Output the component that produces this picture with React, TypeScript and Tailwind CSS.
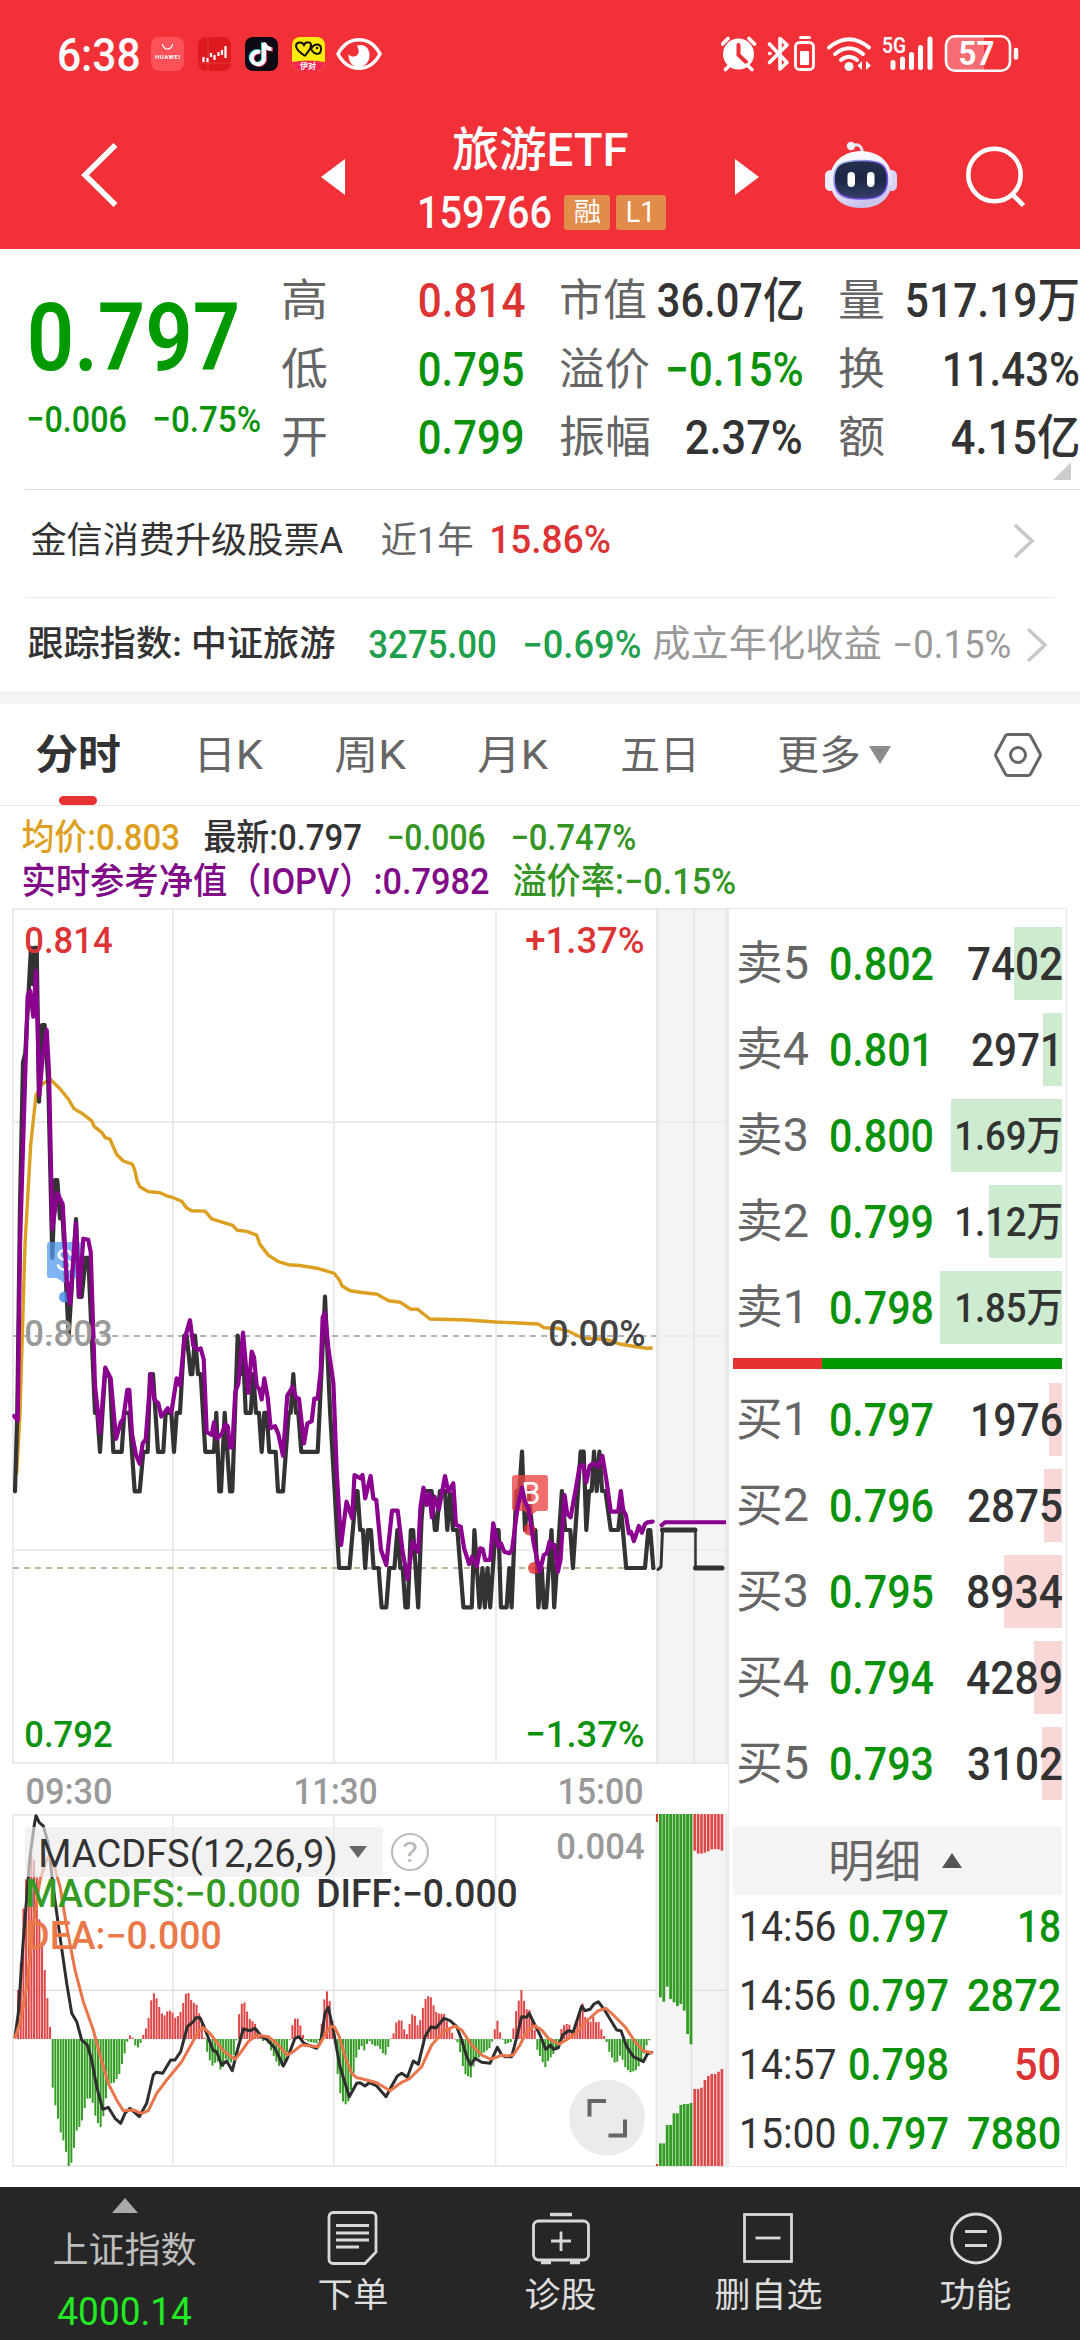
import { useLayoutEffect, useRef, type ReactNode } from "react";

/* Single-line text whose glyphs are condensed or widened to a given ink width. */
function Fit({ w, className = "", children }: { w: number; className?: string; children: ReactNode }) {
  const ref = useRef<HTMLSpanElement>(null);
  useLayoutEffect(() => {
    const el = ref.current;
    if (!el) return;
    const pad = parseFloat(getComputedStyle(el).fontSize) * 0.09;
    el.style.transform = `translateX(${-pad / 2}px) scaleX(${(w + pad) / el.offsetWidth})`;
  });
  return (
    <span className={"block shrink-0 whitespace-nowrap leading-none " + className} style={{ width: w }}>
      <span ref={ref} className="inline-block origin-left whitespace-pre">
        {children}
      </span>
    </span>
  );
}

/* Chart caption: y is the vertical centre of the capitals. */
function Cap({ x, y, w, size, fill, weight = 500, children }: { x: number; y: number; w: number; size: number; fill: string; weight?: number; children: string }) {
  return (
    <text x={x - size * 0.045} y={y + size * 0.356} fontSize={size} fontWeight={weight} fill={fill} textLength={w + size * 0.09} lengthAdjust="spacingAndGlyphs">
      {children}
    </text>
  );
}

type P = [number, number][];
const lowRes = (pts: P): P => pts.map(([x, y]) => [x / 3, 900 + y / 2.613]);
const right = (pts: P): P => pts.map(([x, y]) => [320 + x / 2.985, 1260 + y / 3]);
const macdPts = (a: P, b: P): P => [...a, ...b.map(([x, y]) => [x + 1080, y] as [number, number])].map(([x, y]) => [x / 3, 1800 + y / 3]);
const str = (pts: P) => pts.map(([x, y]) => `${x.toFixed(1)},${y.toFixed(1)}`).join(" ");

const price = str([
  ...lowRes([[45, 1545], [52, 1340], [60, 800], [69, 425], [76, 400], [93, 125], [98, 220], [103, 125], [110, 125], [117, 527], [126, 327], [134, 327], [145, 480], [157, 935], [165, 732], [172, 732], [180, 832], [188, 832], [206, 1138], [228, 834], [236, 1037], [245, 1037], [257, 935], [265, 935], [285, 1340], [292, 1340], [300, 1442], [316, 1225], [330, 1250], [340, 1442], [365, 1442], [373, 1340], [388, 1340], [404, 1545], [419, 1545], [430, 1442], [443, 1442], [450, 1239], [459, 1239], [474, 1442], [490, 1442], [497, 1340], [514, 1340], [522, 1442], [530, 1340], [540, 1340], [553, 1138], [560, 1138], [572, 1239], [577, 1239], [585, 1138], [594, 1239], [602, 1239], [616, 1442], [642, 1442], [649, 1340], [658, 1545], [663, 1545], [674, 1340], [690, 1545], [697, 1545], [713, 1138], [722, 1239], [729, 1170], [737, 1340], [752, 1340], [760, 1239], [768, 1340], [777, 1340], [785, 1442], [793, 1340], [800, 1340], [808, 1442], [827, 1442], [834, 1545], [849, 1545], [866, 1340], [872, 1340], [880, 1239], [888, 1340], [895, 1340], [904, 1442], [953, 1442]]),
  ...right([[15, 110], [30, 455], [57, 924], [88, 924], [108, 693], [112, 693], [120, 810], [128, 810], [135, 924], [143, 810], [152, 810], [160, 924], [175, 924], [184, 1042], [198, 1042], [207, 924], [222, 924], [231, 810], [240, 924], [247, 924], [255, 1042], [262, 1042], [271, 810], [278, 810], [293, 1042], [303, 780], [310, 693], [333, 693], [343, 810], [348, 810], [358, 693], [373, 693], [380, 810], [388, 700], [397, 810], [410, 810], [428, 1042], [453, 1042], [461, 810], [476, 1042], [485, 924], [492, 1042], [500, 924], [508, 1042], [524, 810], [533, 810], [540, 1042], [557, 1042], [565, 924], [572, 1042], [586, 693], [595, 693], [603, 575], [612, 810], [622, 693], [634, 810], [643, 810], [652, 1042], [662, 924], [668, 1042], [675, 1042], [691, 810], [699, 1042], [722, 693], [732, 810], [747, 810], [755, 924], [778, 575], [787, 575], [795, 810], [803, 693], [811, 693], [818, 575], [826, 693], [834, 575], [842, 693], [852, 693], [868, 810], [890, 810], [898, 740], [914, 924], [970, 924], [980, 810], [986, 810], [995, 924]]),
]);

const iopv = str([
  ...lowRes([[43, 1348], [53, 1360], [60, 900], [72, 560], [83, 250], [90, 237], [100, 305], [108, 185], [112, 300], [118, 510], [128, 410], [140, 340], [147, 450], [157, 860], [172, 765], [188, 795], [200, 990], [210, 1055], [228, 845], [238, 1035], [250, 885], [265, 888], [272, 920], [285, 1270], [300, 1392], [316, 1222], [332, 1250], [348, 1408], [362, 1365], [370, 1355], [382, 1280], [388, 1280], [396, 1395], [408, 1450], [419, 1473], [428, 1420], [437, 1410], [452, 1239], [463, 1305], [475, 1315], [484, 1350], [503, 1328], [514, 1340], [530, 1250], [540, 1268], [553, 1150], [570, 1098], [580, 1165], [592, 1175], [602, 1172], [611, 1200], [620, 1390], [635, 1398], [642, 1365], [650, 1408], [665, 1395], [676, 1370], [683, 1375], [690, 1430], [697, 1430], [706, 1285], [715, 1265], [729, 1130], [745, 1288], [755, 1180], [762, 1195], [770, 1270], [778, 1278], [785, 1305], [793, 1250], [803, 1300], [812, 1380], [825, 1375], [835, 1395], [849, 1452], [862, 1295], [878, 1272], [888, 1300], [897, 1303], [912, 1420], [922, 1368], [935, 1362], [943, 1303], [953, 1303], [962, 1230], [968, 1090], [975, 1078], [985, 1170]]),
  ...right([[40, 370], [50, 640], [63, 855], [79, 725], [96, 775], [103, 645], [120, 655], [127, 645], [135, 715], [151, 648], [159, 715], [168, 720], [182, 870], [198, 915], [215, 752], [232, 752], [246, 870], [261, 958], [277, 845], [293, 875], [300, 740], [309, 683], [318, 735], [326, 700], [334, 772], [342, 710], [355, 748], [373, 648], [383, 695], [398, 670], [406, 795], [420, 800], [430, 865], [445, 912], [454, 890], [468, 920], [478, 865], [486, 868], [493, 900], [508, 900], [517, 790], [532, 860], [540, 850], [550, 875], [565, 880], [573, 870], [590, 740], [603, 683], [612, 725], [622, 745], [638, 850], [656, 935], [668, 885], [677, 880], [685, 845], [693, 860], [700, 855], [710, 935], [718, 900], [730, 705], [738, 762], [748, 772], [763, 690], [775, 620], [786, 615], [795, 667], [805, 618], [815, 610], [830, 620], [843, 588], [855, 660], [868, 755], [890, 755], [898, 693], [905, 750], [913, 765], [922, 820], [928, 815], [937, 843], [952, 798], [961, 818], [970, 792], [978, 787], [993, 785]]),
]);

const avg = str([
  ...lowRes([[50, 1500], [60, 1340], [75, 900], [92, 640], [108, 510], [125, 482], [150, 468], [180, 493], [205, 520], [222, 545], [250, 560], [275, 577], [283, 592], [305, 607], [316, 621], [330, 625], [350, 665], [370, 682], [397, 690], [404, 705], [412, 735], [420, 750], [445, 762], [480, 765], [500, 773], [520, 778], [545, 787], [560, 805], [575, 812], [615, 813], [635, 833], [698, 850], [712, 863], [740, 866], [770, 876], [780, 900], [805, 928], [835, 945], [865, 953], [900, 955], [950, 962]]),
  ...right([[20, 33], [42, 40], [58, 60], [66, 78], [90, 92], [120, 97], [170, 103], [205, 122], [240, 127], [270, 147], [292, 148], [328, 177], [440, 180], [525, 186], [652, 192], [668, 203], [710, 205], [745, 215], [785, 235], [850, 238], [870, 243], [893, 252], [945, 260], [975, 265], [993, 264]]),
]);

const diff = str(macdPts(
  [[45, 710], [55, 640], [70, 420], [90, 170], [103, 75], [108, 47], [118, 68], [130, 78], [145, 130], [160, 265], [180, 410], [200, 550], [215, 640], [230, 665], [245, 720], [262, 735], [275, 780], [290, 860], [308, 928], [325, 922], [345, 955], [362, 970], [375, 940], [390, 925], [418, 950], [440, 910], [460, 825], [468, 817], [488, 820], [512, 780], [525, 780], [542, 755], [562, 680], [580, 665], [587, 653], [600, 653], [612, 680], [640, 752], [650, 755], [665, 795], [680, 783], [697, 812], [715, 740], [730, 687], [750, 692], [765, 685], [785, 710], [800, 718], [825, 745], [850, 798], [862, 775], [885, 715], [897, 710], [912, 730], [950, 745], [962, 725], [975, 640], [985, 622], [1000, 690], [1020, 800], [1048, 890], [1070, 850]],
  [[0, 848], [15, 858], [28, 848], [50, 858], [78, 890], [95, 858], [112, 828], [125, 820], [142, 832], [160, 783], [175, 793], [195, 710], [213, 680], [228, 684], [252, 655], [270, 662], [290, 680], [305, 720], [320, 770], [332, 795], [345, 775], [365, 787], [390, 790], [412, 742], [425, 765], [435, 770], [455, 770], [468, 720], [485, 650], [500, 652], [508, 640], [520, 665], [540, 705], [557, 748], [572, 735], [580, 748], [595, 743], [608, 705], [625, 692], [640, 695], [665, 618], [675, 632], [690, 628], [702, 612], [715, 605], [735, 632], [770, 690], [783, 692], [800, 740], [820, 770], [850, 785], [862, 762], [875, 757]],
));

const dea = str(macdPts(
  [[45, 712], [60, 670], [80, 560], [100, 370], [120, 240], [140, 178], [148, 170], [160, 188], [180, 260], [200, 380], [225, 510], [250, 605], [280, 690], [300, 765], [325, 850], [350, 900], [370, 932], [400, 930], [425, 940], [445, 932], [470, 880], [500, 840], [545, 785], [570, 740], [595, 695], [610, 683], [630, 700], [670, 752], [705, 778], [720, 760], [745, 725], [770, 705], [805, 710], [830, 730], [862, 765], [880, 755], [905, 735], [955, 740], [975, 705], [990, 680], [1003, 680], [1018, 710], [1035, 770], [1055, 820], [1070, 833]],
  [[0, 835], [50, 848], [90, 872], [125, 847], [150, 835], [185, 800], [215, 735], [250, 695], [285, 678], [305, 690], [335, 735], [365, 765], [390, 777], [410, 772], [425, 765], [440, 768], [460, 765], [480, 735], [500, 695], [525, 677], [545, 690], [565, 715], [598, 732], [640, 707], [680, 663], [715, 632], [738, 625], [760, 645], [795, 680], [825, 725], [850, 752], [875, 758]],
));

const envelope = macdPts(
  [[50, 712], [54, 570], [62, 490], [70, 325], [78, 238], [85, 190], [93, 165], [100, 175], [108, 200], [117, 350], [125, 420], [132, 490], [141, 585], [150, 682], [153, 717], [156, 850], [165, 912], [172, 945], [180, 992], [188, 1015], [196, 1043], [204, 1098], [212, 1098], [220, 1055], [230, 990], [243, 975], [252, 930], [262, 895], [275, 895], [285, 945], [300, 987], [308, 960], [316, 905], [325, 850], [340, 850], [356, 828], [372, 768], [380, 730], [384, 717], [388, 705], [396, 710], [400, 717], [404, 735], [417, 745], [425, 717], [434, 692], [443, 675], [450, 615], [459, 578], [466, 583], [475, 615], [490, 652], [500, 635], [515, 630], [523, 655], [538, 645], [546, 622], [555, 587], [562, 570], [570, 592], [578, 612], [586, 603], [594, 630], [602, 655], [609, 690], [614, 717], [618, 745], [633, 793], [641, 800], [650, 775], [665, 820], [675, 775], [697, 790], [706, 735], [710, 717], [713, 655], [721, 630], [729, 593], [738, 625], [746, 650], [754, 668], [761, 658], [770, 688], [778, 690], [785, 725], [800, 717], [810, 745], [834, 795], [842, 802], [858, 775], [865, 730], [869, 717], [873, 700], [880, 656], [895, 656], [904, 687], [912, 717], [925, 725], [950, 730], [960, 717], [968, 640], [975, 578], [984, 572], [992, 625], [1000, 690], [1004, 717], [1008, 775], [1016, 855], [1024, 897], [1035, 915], [1048, 900], [1064, 797], [1072, 755]],
  [[5, 738], [13, 752], [25, 720], [40, 737], [55, 738], [70, 762], [78, 765], [90, 720], [102, 697], [110, 660], [125, 662], [133, 690], [142, 705], [150, 663], [158, 638], [166, 650], [174, 682], [182, 655], [190, 615], [198, 592], [210, 585], [221, 618], [230, 640], [253, 642], [262, 670], [277, 700], [285, 718], [293, 728], [301, 760], [309, 803], [317, 825], [332, 833], [342, 792], [358, 770], [375, 755], [388, 745], [398, 720], [404, 688], [412, 662], [420, 697], [427, 717], [436, 732], [455, 725], [460, 685], [468, 633], [484, 570], [492, 603], [500, 628], [508, 630], [524, 690], [530, 745], [555, 803], [565, 780], [580, 762], [598, 735], [604, 685], [615, 672], [627, 672], [635, 695], [643, 695], [652, 655], [660, 623], [667, 607], [675, 650], [690, 668], [700, 650], [706, 668], [714, 662], [730, 705], [738, 720], [746, 752], [762, 787], [770, 790], [778, 765], [786, 775], [794, 800], [810, 817], [826, 812], [842, 790], [858, 740], [866, 720], [874, 725]],
);

const ZERO = 2039;
const bars = Array.from({ length: 238 }, (_, i) => {
  const x = 18 + i * 2.663;
  let k = envelope.findIndex((p) => p[0] >= x);
  if (k < 0) k = envelope.length - 1;
  const b = envelope[k];
  const a = envelope[Math.max(0, k - 1)];
  const t = b[0] === a[0] ? 0 : Math.min(1, (x - a[0]) / (b[0] - a[0]));
  return { x, y: a[1] + (b[1] - a[1]) * t };
});

const sideTopGreen = [592, 605, 560, 597, 607, 618, 612, 632, 702, 733];
const sideBotGreen = [1030, 1030, 975, 975, 940, 940, 915, 912, 912, 909];
const sideTopRed = [152, 161, 161, 158, 154, 148, 147, 148, 152];
const sideBotRed = [867, 867, 863, 840, 828, 822, 822, 815, 807];

function PriceChart() {
  return (
    <svg width="728" height="907" viewBox="0 908 728 907" className="block">
      <rect x="656" y="908" width="72" height="855" fill="#f4f4f4" />
      <g stroke="#ebebeb" strokeWidth="2" fill="none">
        <path d="M12 909H728M12 1122H728M656 1336H728M12 1550H728M12 1763H728M13 908V1764M173 908V1764M334 908V1764M496 908V1764" />
        <path d="M694 908V1764" strokeWidth="1" stroke="#dcdcdc" />
        <path d="M657.5 908V1764M726.5 908V1764" strokeWidth="3" stroke="#e8e8e8" />
      </g>
      <path d="M13 1336H656" stroke="#999" strokeWidth="1.6" strokeDasharray="6 5" />
      <path d="M13 1568H656" stroke="#b59c6c" strokeWidth="1.4" strokeDasharray="6 5" />
      <polyline points={avg} fill="none" strokeLinejoin="round" stroke="#dc9f22" strokeWidth="3.4" />
      <g fill="none" strokeLinejoin="round" strokeLinecap="round">
        <polyline points={price} stroke="#333" strokeWidth="4.2" />
        <path d="M658 1569.500L661 1567L662.500 1530" stroke="#333" strokeWidth="3" />
        <path d="M662.500 1530H695" stroke="#333" strokeWidth="5" />
        <path d="M695.500 1530V1568" stroke="#333" strokeWidth="2.500" />
        <path d="M695.500 1568H722" stroke="#333" strokeWidth="5" />
      </g>
      <g>
        <path d="M50 1242H79a3 3 0 0 1 3 3V1275a3 3 0 0 1-3 3H69L64 1283L57 1278H50a3 3 0 0 1-3-3V1245a3 3 0 0 1 3-3Z" fill="#5599ee" fillOpacity=".75" />
        <circle cx="64.500" cy="1297" r="5.500" fill="#3f8ae8" fillOpacity=".8" />
        <Cap x={57} y={1260} w={15} size={31} fill="#fff" weight={400}>S</Cap>
        <path d="M515 1475H545a3 3 0 0 1 3 3V1508a3 3 0 0 1-3 3H537L530 1516L524 1511H515a3 3 0 0 1-3-3V1478a3 3 0 0 1 3-3Z" fill="#ea4444" fillOpacity=".78" />
        <circle cx="529.500" cy="1529.500" r="6" fill="#e02f2f" fillOpacity=".8" />
        <circle cx="534" cy="1568" r="6" fill="#e02f2f" fillOpacity=".8" />
        <Cap x={523} y={1493} w={16} size={32} fill="#fff" weight={400}>B</Cap>
      </g>
      <g fill="none" strokeLinejoin="round" strokeLinecap="round">
        <polyline points={iopv} stroke="#8b008f" strokeWidth="4.2" />
        <path d="M660 1526L662 1525L665 1522.300H726" stroke="#8b008f" strokeWidth="4" strokeLinecap="butt" />
      </g>
      <Cap x={26} y={940} w={85} size={37} fill="#dc3434">0.814</Cap>
      <Cap x={527} y={940} w={116} size={37} fill="#dc3434">+1.37%</Cap>
      <Cap x={26} y={1332.500} w={85} size={37} fill="#999">0.803</Cap>
      <Cap x={550} y={1332.500} w={94} size={37} fill="#444">0.00%</Cap>
      <Cap x={26} y={1734} w={85} size={37} fill="#0c920c">0.792</Cap>
      <Cap x={527} y={1734} w={116} size={37} fill="#0c920c">−1.37%</Cap>
      <Cap x={27} y={1791} w={84} size={36} fill="#999">09:30</Cap>
      <Cap x={295} y={1791} w={81} size={36} fill="#999">11:30</Cap>
      <Cap x={559} y={1791} w={83} size={36} fill="#999">15:00</Cap>
    </svg>
  );
}

function MacdChart() {
  return (
    <svg width="728" height="354" viewBox="0 1814 728 354" className="block">
      <rect x="656" y="1815" width="72" height="351" fill="#f4f4f4" />
      <g stroke="#ebebeb" strokeWidth="2" fill="none">
        <path d="M12 1815H656M12 2166H728M13 1814V2167M173 1814V2167M334 1814V2167M495.500 1814V2167" />
        <path d="M12 1990.300H728M691.500 2040V2166" stroke="#dcdcdc" strokeWidth="1.200" />
        <path d="M656.500 1814V2167M726.500 1814V2167" strokeWidth="2" stroke="#e8e8e8" />
      </g>
      {bars.map(({ x, y }, i) => (
        <rect key={i} x={x - 0.9} y={Math.min(y, ZERO)} width="2" height={Math.max(0.7, Math.abs(y - ZERO))} fill={y < ZERO ? "#df4545" : "#349c24"} />
      ))}
      <g>
        <rect x="656" y="1814" width="2" height="8" fill="#cc3a22" />
        <rect x="656" y="2164" width="2" height="2" fill="#cc3a22" />
        {sideTopGreen.map((v, i) => (
          <rect key={i} x={659 + i * 3.4} y="1814" width="2.800" height={v / 3 - 14} fill="#339c24" />
        ))}
        {sideBotGreen.map((v, i) => (
          <rect key={i} x={659 + i * 3.4} y={1800 + v / 3} width="2.800" height={366 - v / 3} fill="#339c24" />
        ))}
        {sideTopRed.map((v, i) => (
          <rect key={i} x={693.4 + i * 3.4} y="1814" width="2.600" height={v / 3 - 14} fill="#e04848" />
        ))}
        {sideBotRed.map((v, i) => (
          <rect key={i} x={693.4 + i * 3.4} y={1800 + v / 3} width="2.600" height={366 - v / 3} fill="#e04848" />
        ))}
      </g>
      <g fill="none" strokeLinejoin="round" strokeLinecap="round">
        <polyline points={diff} stroke="#2e2e2e" strokeWidth="3" />
        <polyline points={dea} stroke="#e8764a" strokeWidth="3" />
      </g>
      <rect x="25" y="1827" width="358" height="50" rx="4" fill="#ebebeb" fillOpacity=".66" />
      <Cap x={40} y={1853.500} w={296} size={38} fill="#333" weight={400}>MACDFS(12,26,9)</Cap>
      <path d="M349 1846H367L358 1858Z" fill="#666" />
      <circle cx="410" cy="1852" r="18" fill="#fff" stroke="#bdbdbd" strokeWidth="2.200" />
      <Cap x={403.500} y={1852} w={13} size={28} fill="#b8b8b8" weight={400}>?</Cap>
      <Cap x={27} y={1893} w={272} size={38} fill="#349a24">MACDFS:−0.000</Cap>
      <Cap x={318} y={1893} w={198} size={38} fill="#333">DIFF:−0.000</Cap>
      <Cap x={27} y={1935.500} w={193} size={38} fill="#ea7848">DEA:−0.000</Cap>
      <Cap x={558} y={1846} w={85} size={37} fill="#999">0.004</Cap>
      <circle cx="607" cy="2117.700" r="38" fill="#ebebeb" />
      <path d="M589.500 2116.500V2101H606M625 2119.500V2135.500H608.500" fill="none" stroke="#666" strokeWidth="4" />
    </svg>
  );
}

type Level = { label: string; price: string; vol: string; w: number; bar: number };
const sells: Level[] = [
  { label: "卖5", price: "0.802", vol: "7402", w: 92, bar: 48 },
  { label: "卖4", price: "0.801", vol: "2971", w: 88, bar: 19 },
  { label: "卖3", price: "0.800", vol: "1.69万", w: 105, bar: 111 },
  { label: "卖2", price: "0.799", vol: "1.12万", w: 105, bar: 73 },
  { label: "卖1", price: "0.798", vol: "1.85万", w: 105, bar: 122 },
];
const buys: Level[] = [
  { label: "买1", price: "0.797", vol: "1976", w: 89, bar: 13 },
  { label: "买2", price: "0.796", vol: "2875", w: 92, bar: 18 },
  { label: "买3", price: "0.795", vol: "8934", w: 93, bar: 58 },
  { label: "买4", price: "0.794", vol: "4289", w: 93, bar: 28 },
  { label: "买5", price: "0.793", vol: "3102", w: 92, bar: 20 },
];

function Row({ d, tint }: { d: Level; tint: string }) {
  const big = d.vol.includes("万");
  return (
    <div className="relative flex h-[86px] shrink-0 items-center">
      <div className={"absolute right-0 top-[6.500px] h-[73px] " + tint} style={{ width: d.bar }} />
      <Fit w={69} className="relative ml-[5px] text-[46px] text-[#666]">{d.label}</Fit>
      <Fit w={101} className="relative ml-[24px] text-[47px] font-medium text-[#0a930a]">{d.price}</Fit>
      <Fit w={d.w} className={"relative ml-auto mr-[1px] font-medium text-[#333] " + (big ? "pt-[2px] text-[41px]" : "text-[47px]")}>{d.vol}</Fit>
    </div>
  );
}

const trades = [
  { t: "14:56", p: "0.797", v: "18", w: 40, c: "text-[#0a930a]" },
  { t: "14:56", p: "0.797", v: "2872", w: 90, c: "text-[#0a930a]" },
  { t: "14:57", p: "0.798", v: "50", w: 43, c: "text-[#dc3434]" },
  { t: "15:00", p: "0.797", v: "7880", w: 90, c: "text-[#0a930a]" },
];

function OrderBook() {
  return (
    <div className="flex h-[1259px] w-[339px] flex-col border border-[#e8e8e8] pl-[4px] pr-[4px] pt-[11px]">
      {sells.map((d) => <Row key={d.label} d={d} tint="bg-[#cdebcf]" />)}
      <div className="mt-[8px] flex h-[11px] shrink-0">
        <div className="w-[89px] bg-[#e63232]" />
        <div className="flex-1 bg-[#009a00]" />
      </div>
      <div className="mt-[7px] shrink-0">
        {buys.map((d) => <Row key={d.label} d={d} tint="bg-[#fad7d7]" />)}
      </div>
      <div className="mt-[20px] flex h-[69px] shrink-0 items-center bg-[#f4f4f4] pl-[97px]">
        <Fit w={89} className="pt-[3px] text-[45px] text-[#666]">明细</Fit>
        <svg width="20" height="16" viewBox="0 0 20 16" className="ml-[23px]"><path d="M10 0L20 15H0Z" fill="#555" /></svg>
      </div>
      <div className="-mt-[3px] shrink-0">
        {trades.map((d, i) => (
          <div key={i} className="flex h-[69px] items-center">
            <Fit w={94} className="ml-[8px] text-[42px] text-[#333]">{d.t}</Fit>
            <Fit w={97} className="ml-[15px] text-[45px] font-medium text-[#0a930a]">{d.p}</Fit>
            <Fit w={d.w} className={"ml-auto mr-[3px] text-[45px] font-medium " + d.c}>{d.v}</Fit>
          </div>
        ))}
      </div>
    </div>
  );
}

function StatusBar() {
  return (
    <div className="flex h-[108px] items-center pl-[59px] text-white">
      <Fit w={80} className="text-[47px] font-medium">6:38</Fit>
      <svg width="33" height="34" viewBox="0 0 33 34" className="ml-[12px]">
        <rect width="33" height="34" rx="8" fill="#ff5159" />
        <path d="M11.500 7a5 5 0 0 0 10 0" fill="none" stroke="#fff" strokeWidth="1.200" />
        <text x="4" y="22" fontSize="6" fontWeight="700" fill="#fff" textLength="25">HUAWEI</text>
      </svg>
      <svg width="33" height="34" viewBox="0 0 33 34" className="ml-[14px]">
        <rect width="33" height="34" rx="8" fill="#dc1a20" />
        <path d="M10 0V34M0 26H33" stroke="#e83a3c" strokeWidth="1" />
        <path d="M5.500 20v5M9.500 21v4M13 16v4M16.500 18v5M20.500 15v4M24 13v5M27.500 9v12" stroke="#fff" strokeWidth="2.200" />
      </svg>
      <svg width="33" height="34" viewBox="0 0 33 34" className="ml-[14px]">
        <rect width="33" height="34" rx="8" fill="#0b0914" />
        <g fill="none" strokeWidth="4">
          <path d="M14 14.500a6.300 6.300 0 1 0 4 8V5.500c1 4 4 6 7.500 6" stroke="#25e6e0" />
          <path d="M16 15.500a6.300 6.300 0 1 0 4 8V6.500c1 4 4 6 8 6" stroke="#f0305a" />
          <path d="M15 15a6.300 6.300 0 1 0 4 8V6c1 4 4 6 7.500 6" stroke="#fff" />
        </g>
      </svg>
      <svg width="33" height="34" viewBox="0 0 33 34" className="ml-[14px]">
        <rect width="33" height="34" rx="8" fill="#ffeb0b" />
        <path d="M0 25Q16 22 33 25V26a8 8 0 0 1-8 8H8a8 8 0 0 1-8-8Z" fill="#f5284e" />
        <path d="M13 19C7 15 4 12 4 9c0-4 6-5 8-1 2-4 7-3 7 0 0 4-4 8-6 11M19 12c3-6 10-6 10 0s-6 7-10 0Z" fill="none" stroke="#111" strokeWidth="2" />
        <circle cx="25" cy="11" r="1.200" fill="#111" />
        <text x="8" y="32" fontSize="8" fontWeight="700" fill="#fff">伊对</text>
      </svg>
      <svg width="46" height="32" viewBox="0 0 46 32" className="ml-[11px]">
        <path d="M2 16C12-3 34-3 44 16 34 35 12 35 2 16Z" fill="none" stroke="#fff" strokeWidth="3.500" />
        <path d="M21 7.500C30 5 34 12 33.500 18 33 25 28 29 23 29 16 29 12 23 12.500 16c3 4 9 3 10-1 .6-3-.5-5-1.500-7.500Z" fill="#fff" />
      </svg>
      <svg width="298" height="58" viewBox="721 25 298 58" className="ml-[339px] shrink-0">
        <g fill="#fff" stroke="none">
          <circle cx="738.500" cy="54" r="15.500" />
          <path d="M738.500 45V55L746 62" fill="none" stroke="#f03038" strokeWidth="4" strokeLinecap="round" />
          <path d="M722.500 44L728 38.500M754.500 44L749 38.500M730 65L725.500 69.500M747 65L752 69.500" stroke="#fff" strokeWidth="3.600" strokeLinecap="round" />
        </g>
        <path d="M769.500 44L787 62.500L780 69V38.500L787 45L769.500 62.500M769.500 53.500h.5" fill="none" stroke="#fff" strokeWidth="3.600" strokeLinejoin="round" strokeLinecap="round" />
        <rect x="795.500" y="42.500" width="18" height="27" rx="4" fill="none" stroke="#fff" strokeWidth="2.800" />
        <rect x="800" y="51" width="9" height="14" rx="1" fill="#fff" />
        <rect x="799" y="36" width="12" height="3" rx="1.500" fill="#fff" />
        <g fill="none" stroke="#fff" strokeWidth="4" strokeLinecap="round">
          <path d="M829 47.500Q849 31 869 47.500M835 54Q849 42.500 863 54M841 60Q849 53.500 857 60" />
        </g>
        <circle cx="849" cy="66.500" r="4.500" fill="#fff" />
        <path d="M862 61V70L857.500 65.500ZM866 61V70L871 65.500Z" fill="#fff" />
        <text x="882" y="53" fontSize="22" fontWeight="600" fill="#fff" textLength="24" lengthAdjust="spacingAndGlyphs">5G</text>
        <path d="M893 62.500V67.500M902.500 59V67.500M911.500 54.500V67.500M920.500 47.500V67.500M930 39V67.500" stroke="#fff" strokeWidth="5" strokeLinecap="round" />
        <path d="M954 36.500H984V70.500H954a8 8 0 0 1-8-8V45a8 8 0 0 1 8-8Z" fill="#f56d73" />
        <rect x="946" y="36.300" width="64" height="34.500" rx="9" fill="none" stroke="#fff" strokeWidth="2.600" />
        <path d="M1016 50V57.500" stroke="#fff" strokeWidth="4.500" strokeLinecap="round" />
        <Cap x={960} y={53.500} w={33} size={33} fill="#fff" weight={700}>57</Cap>
      </svg>
    </div>
  );
}

function Header() {
  return (
    <div className="flex h-[141px] items-center pl-[81px] text-white">
      <svg width="38" height="66" viewBox="0 0 38 66" className="-mt-[8px]"><path d="M34.500 3L4 33L34.500 63" fill="none" stroke="#fff" strokeWidth="5.500" /></svg>
      <svg width="24" height="36" viewBox="0 0 24 36" className="-mt-[4px] ml-[202px]"><path d="M24 0V36L0 18Z" fill="#fff" /></svg>
      <div className="ml-[74px] flex w-[247px] flex-col pt-[3px]">
        <div className="flex h-[64px] items-center pl-[35px]">
          <Fit w={173} className="pt-[3px] text-[47px] font-medium">旅游ETF</Fit>
        </div>
        <div className="flex h-[64px] items-center">
          <Fit w={131} className="pt-[2px] text-[44px] font-medium">159766</Fit>
          <div className="ml-[14px] flex h-[35px] w-[46px] items-center rounded-[3px] bg-[#e28c49] pl-[11px]"><Fit w={25} className="text-[26px]">融</Fit></div>
          <div className="ml-[6px] flex h-[35px] w-[50px] items-center rounded-[3px] bg-[#e28c49] pl-[11px]"><Fit w={27} className="text-[29px]">L1</Fit></div>
        </div>
      </div>
      <svg width="24" height="36" viewBox="0 0 24 36" className="-mt-[4px] ml-[69px]"><path d="M0 0V36L24 18Z" fill="#fff" /></svg>
      <svg width="72" height="68" viewBox="0 0 72 68" className="-mt-[8px] ml-[66px]">
        <defs>
          <linearGradient id="shell" x1="0" y1="0" x2=".3" y2="1"><stop offset="0" stopColor="#ffffff" /><stop offset=".6" stopColor="#ecebfa" /><stop offset="1" stopColor="#c9c4ec" /></linearGradient>
          <linearGradient id="visor" x1="0" y1="0" x2="0" y2="1"><stop offset="0" stopColor="#25304f" /><stop offset=".5" stopColor="#1c2746" /><stop offset="1" stopColor="#34406a" /></linearGradient>
          <linearGradient id="rim" x1="0" y1="0" x2="1" y2="1"><stop offset="0" stopColor="#a8d8f4" /><stop offset=".5" stopColor="#8c5cf0" /><stop offset="1" stopColor="#5548d8" /></linearGradient>
        </defs>
        <path d="M27 5C33 2 37 5 37.500 12" fill="none" stroke="#e4e0f5" strokeWidth="3" />
        <circle cx="26" cy="5" r="4.200" fill="#f1effb" />
        <rect x="0" y="29" width="11" height="21" rx="5.500" fill="#efedfb" />
        <rect x="61" y="29" width="11" height="21" rx="5.500" fill="#d9d4f4" />
        <path d="M36 10C56 10 67 24 67 38 67 55 57 67 36 67S5 55 5 38C5 24 16 10 36 10Z" fill="url(#shell)" />
        <path d="M36 19.500C55 19.500 62.500 23 62.500 38S55 58 36 58 9 53 9 38 17 19.500 36 19.500Z" fill="url(#visor)" stroke="url(#rim)" strokeWidth="1.600" />
        <rect x="22.500" y="31" width="7.500" height="15" rx="3.700" fill="#fff" />
        <rect x="42" y="31" width="7.500" height="15" rx="3.700" fill="#fff" />
      </svg>
      <svg width="62" height="62" viewBox="0 0 62 62" className="-mt-[3px] ml-[69px]"><circle cx="28.500" cy="29" r="26.200" fill="none" stroke="#fff" strokeWidth="4.600" /><path d="M47 49L57.500 59.500" stroke="#fff" strokeWidth="4.600" /></svg>
    </div>
  );
}

const V = "text-[48px] font-medium ";
const L = "text-[44px] text-[#666]";

function Quote() {
  return (
    <div className="flex h-[240px] overflow-hidden">
      <div className="w-[283px] shrink-0 pt-[41px]">
        <Fit w={205} className="ml-[31px] text-[95px] font-semibold text-[#009a00]">0.797</Fit>
        <div className="mt-[16px] flex">
          <Fit w={97} className="ml-[28px] text-[37px] font-medium text-[#0a930a]">−0.006</Fit>
          <Fit w={105} className="ml-[29px] text-[37px] font-medium text-[#0a930a]">−0.75%</Fit>
        </div>
      </div>
      <div className="relative grid h-[223px] w-[795px] grid-cols-[137px_141px_98px_181px_43px_195px] grid-rows-[68.500px_68.500px_68.500px] items-center pt-[18px]">
        <Fit w={43} className={L}>高</Fit>
        <Fit w={103} className={V + "text-[#dc3434]"}>0.814</Fit>
        <Fit w={84} className={L}>市值</Fit>
        <Fit w={143} className={V + "text-[#333]"}>36.07亿</Fit>
        <Fit w={43} className={L}>量</Fit>
        <Fit w={171} className={V + "ml-auto text-[#333]"}>517.19万</Fit>
        <Fit w={43} className={L}>低</Fit>
        <Fit w={102} className={V + "text-[#0a930a]"}>0.795</Fit>
        <Fit w={87} className={L}>溢价</Fit>
        <Fit w={135} className={V + "ml-[8px] text-[#0a930a]"}>−0.15%</Fit>
        <Fit w={43} className={L}>换</Fit>
        <Fit w={134} className={V + "ml-auto text-[#333]"}>11.43%</Fit>
        <Fit w={43} className={L}>开</Fit>
        <Fit w={102} className={V + "text-[#0a930a]"}>0.799</Fit>
        <Fit w={88} className={L}>振幅</Fit>
        <Fit w={114} className={V + "ml-[28px] text-[#333]"}>2.37%</Fit>
        <Fit w={43} className={L}>额</Fit>
        <Fit w={125} className={V + "ml-auto text-[#333]"}>4.15亿</Fit>
        <svg width="18" height="18" viewBox="0 0 18 18" className="absolute right-[7px] top-[213px]"><path d="M18 0V18H0Z" fill="#ccc" /></svg>
      </div>
    </div>
  );
}

function Chevron({ className }: { className: string }) {
  return (
    <svg width="22" height="36" viewBox="0 0 22 36" className={className}><path d="M2 2L19 18L2 34" fill="none" stroke="#c8c8c8" strokeWidth="3.600" /></svg>
  );
}

function Tabs() {
  const tab = "pt-[2px] text-[40px] text-[#666] ";
  return (
    <div className="flex h-[102px] items-center border-b border-[#e5e5e5] pl-[37px]">
      <div className="relative flex h-full items-center">
        <Fit w={82} className="pt-[2px] text-[41px] font-bold text-[#333]">分时</Fit>
        <div className="absolute bottom-0 left-[22px] h-[9px] w-[38px] rounded-full bg-[#e63232]" />
      </div>
      <Fit w={66} className={tab + "ml-[76px]"}>日K</Fit>
      <Fit w={68} className={tab + "ml-[75px]"}>周K</Fit>
      <Fit w={67} className={tab + "ml-[75px]"}>月K</Fit>
      <Fit w={76} className={tab + "ml-[76px]"}>五日</Fit>
      <Fit w={80} className={tab + "ml-[81px]"}>更多</Fit>
      <svg width="22" height="18" viewBox="0 0 22 18" className="ml-[10px]"><path d="M0 0H22L11 18Z" fill="#8c8c8c" /></svg>
      <svg width="50" height="46" viewBox="0 0 50 46" className="ml-[102px]">
        <path d="M15 2.500H35a3 3 0 0 1 2.600 1.500L47 21.500a3 3 0 0 1 0 3L37.600 42a3 3 0 0 1-2.600 1.500H15a3 3 0 0 1-2.600-1.500L3 24.500a3 3 0 0 1 0-3L12.400 4A3 3 0 0 1 15 2.500Z" fill="none" stroke="#666" strokeWidth="3" />
        <circle cx="25" cy="23" r="7.500" fill="none" stroke="#666" strokeWidth="3" />
      </svg>
    </div>
  );
}

function NavItem({ label, w, children }: { label: string; w: number; children: ReactNode }) {
  return (
    <div className="flex w-[207.700px] flex-col items-center pt-[22px]">
      <svg width="60" height="58" viewBox="0 0 60 58" fill="none" stroke="#d8d8d8" strokeWidth="2.800">{children}</svg>
      <Fit w={w} className="mt-[11px] text-[34px] text-[#ddd]">{label}</Fit>
    </div>
  );
}

export default function App() {
  return (
    <div className="h-[2340px] w-[1080px] overflow-hidden bg-white font-[Roboto,'Noto_Sans_CJK_SC',sans-serif]">
      <div className="bg-[#f13038]">
        <StatusBar />
        <Header />
      </div>
      <Quote />
      <div className="ml-[25px] flex h-[108px] items-center border-t border-[#dedede]">
        <Fit w={310} className="ml-[7px] pb-[6px] text-[36px] text-[#333]">金信消费升级股票A</Fit>
        <Fit w={90} className="ml-[40px] pb-[6px] text-[36px] text-[#666]">近1年</Fit>
        <Fit w={118} className="ml-[19px] pb-[6px] text-[39px] font-medium text-[#dc3434]">15.86%</Fit>
        <Chevron className="-mt-[6px] ml-auto mr-[45px]" />
      </div>
      <div className="ml-[25px] mr-[25px] flex h-[94px] items-center border-t border-[#ececec]">
        <Fit w={305} className="ml-[4px] text-[35px] font-medium text-[#333]">跟踪指数: 中证旅游</Fit>
        <Fit w={125} className="ml-[36px] text-[38px] font-medium text-[#1fa04c]">3275.00</Fit>
        <Fit w={116} className="ml-[29px] text-[38px] font-medium text-[#1fa04c]">−0.69%</Fit>
        <Fit w={226} className="ml-[14px] text-[37px] text-[#999]">成立年化收益</Fit>
        <Fit w={116} className="ml-[14px] text-[38px] text-[#999]">−0.15%</Fit>
        <Chevron className="ml-[16px] shrink-0" />
      </div>
      <div className="h-[13px] bg-[#f4f4f4]" />
      <Tabs />
      <div className="h-[102px] pt-[10px] text-[36px] font-medium">
        <div className="flex h-[44px] items-center">
          <Fit w={155} className="ml-[23px] text-[#dc9f22]">均价:0.803</Fit>
          <Fit w={155} className="ml-[27px] text-[#333]">最新:0.797</Fit>
          <Fit w={96} className="ml-[28px] text-[#349424]">−0.006</Fit>
          <Fit w={123} className="ml-[28px] text-[#349424]">−0.747%</Fit>
        </div>
        <div className="flex h-[44px] items-center">
          <Fit w={465} className="ml-[23px] text-[#800a88]">实时参考净值（IOPV）:0.7982</Fit>
          <Fit w={221} className="ml-[26px] text-[#349424]">溢价率:−0.15%</Fit>
        </div>
      </div>
      <div className="flex h-[1279px]">
        <div className="flex flex-col">
          <PriceChart />
          <div className="-mt-px"><MacdChart /></div>
        </div>
        <OrderBook />
      </div>
      <div className="flex h-[153px] bg-[#262626]">
        <div className="flex w-[249px] flex-col items-center pt-[11px]">
          <svg width="26" height="15" viewBox="0 0 26 15"><path d="M13 0L26 15H0Z" fill="#aaa" /></svg>
          <Fit w={141} className="mt-[20px] text-[36px] text-[#bdbdbd]">上证指数</Fit>
          <Fit w={131} className="mt-[24px] text-[38px] text-[#22ea22]">4000.14</Fit>
        </div>
        <NavItem label="下单" w={68}>
          <path d="M10 3.500H49a4 4 0 0 1 4 4V43L42 54.500H10a4 4 0 0 1-4-4V7.500a4 4 0 0 1 4-4Z" />
          <path d="M13 16.500H46M13 24H46M13 31H46M13 38H36" />
        </NavItem>
        <NavItem label="诊股" w={69}>
          <rect x="2.500" y="12" width="55" height="39" rx="5" />
          <path d="M19 5.500H41M10 53.500H20M39 53.500H49" strokeWidth="3.500" />
          <path d="M30 22.500V42M20 32H40" />
        </NavItem>
        <NavItem label="删自选" w={105}>
          <rect x="6.500" y="5.500" width="47" height="47" />
          <path d="M17.500 29H42.500" />
        </NavItem>
        <NavItem label="功能" w={69}>
          <circle cx="30" cy="29.500" r="24.500" />
          <path d="M19 22.500H41M19 36.500H41" />
        </NavItem>
      </div>
    </div>
  );
}
